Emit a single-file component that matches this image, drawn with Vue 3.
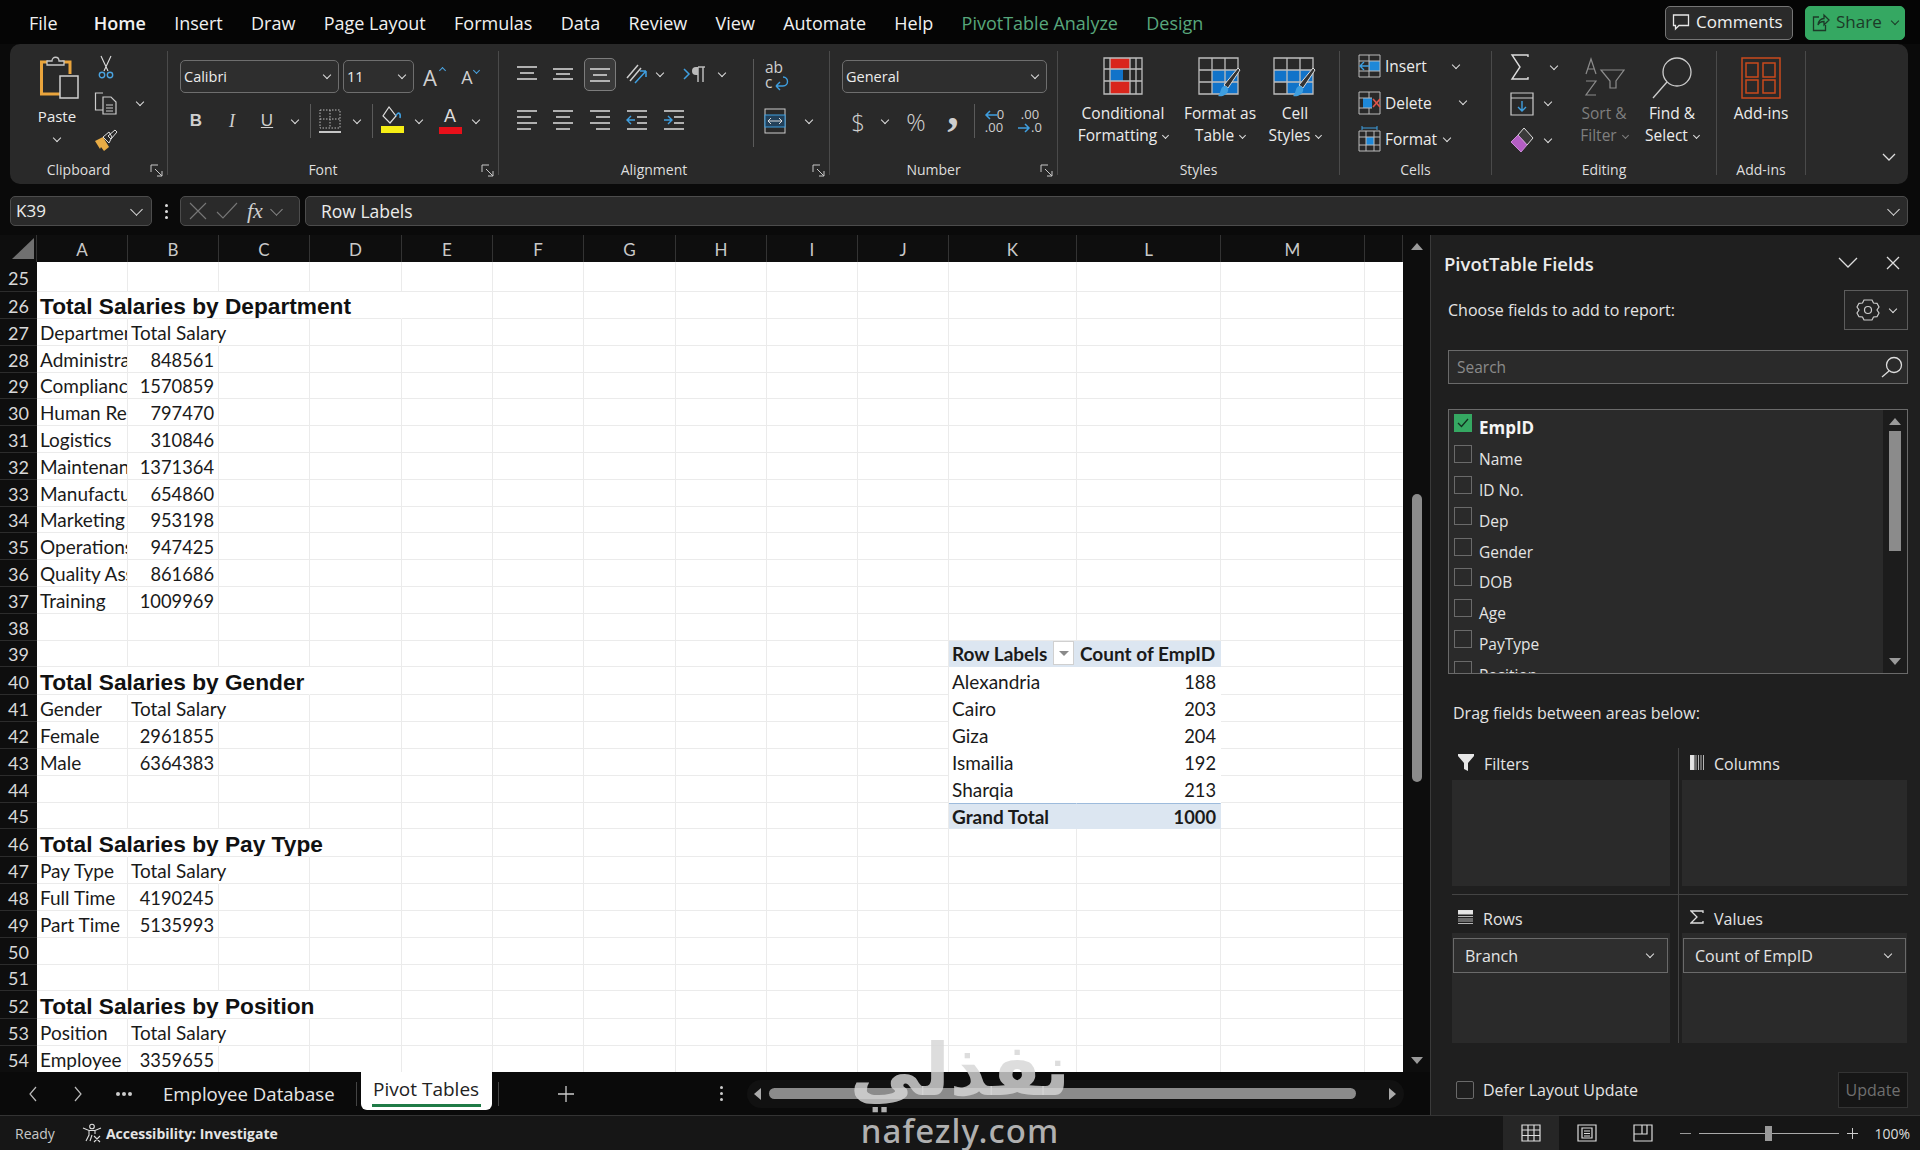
<template>
  <div class="app">
    <!-- tab strip -->
    <div class="menu">
      <div class="menu-tabs">
        <span v-for="t in menuTabs" :key="t.name" class="menu-tab" :class="t.cls">{{ t.name }}</span>
      </div>
      <div class="menu-actions">
        <button class="btn-comments">
          <svg width="18" height="18" viewBox="0 0 18 18" fill="none" stroke="#e6e6e6" stroke-width="1.3"><path d="M1.5 2h15v10.5H7L3.5 16v-3.500h-2z"/></svg>
          Comments
        </button>
        <button class="btn-share">
          <svg width="18" height="20" viewBox="0 0 18 20" fill="none" stroke="#1c3a28" stroke-width="1.3"><path d="M7 5H1.500v13.500h12V13M6 13c0-4 3-6.500 6-6.500V3l5 5-5 5V9.500c-2.500 0-5 1-6 3.500z"/></svg>
          Share <i class="chev dark"></i>
        </button>
      </div>
    </div>

    <!-- ribbon -->
    <div class="ribbon">
      <section class="rg rg-clip">
        <div class="rg-body">
          <div class="paste">
            <svg class="paste-ico" width="40" height="44" viewBox="0 0 40 44" fill="none">
              <path d="M8 6H1.500v32H20" stroke="#e9a43c" stroke-width="3"/>
              <path d="M22 6h8v12" stroke="#e9a43c" stroke-width="3"/>
              <path d="M7 9V5h5c0-5 7-5 7 0h5v4z" fill="#2a2a2a" stroke="#c8c8c8" stroke-width="1.300"/>
              <rect x="20" y="20" width="18" height="22" fill="#2a2a2a" stroke="#d0d0d0" stroke-width="1.500"/>
            </svg>
            <span>Paste</span>
            <i class="chev"></i>
          </div>
          <div class="clip-small">
            <svg width="16" height="24" viewBox="0 0 16 24" fill="none" stroke="#ddd" stroke-width="1.100"><path d="M3 1l7 15M13 1L6 16"/><circle cx="4" cy="20" r="2.700" stroke="#4aa3e0" stroke-width="1.400"/><circle cx="12" cy="20" r="2.700" stroke="#4aa3e0" stroke-width="1.400"/></svg>
            <div class="copy-row">
              <svg width="24" height="24" viewBox="0 0 24 24" fill="none" stroke="#ccc" stroke-width="1.200"><path d="M9 2H1.500v17H9"/><path d="M9 6h8l5 5v12H9z" fill="#2a2a2a"/><path d="M12 14h7M12 17h7M12 20h7" stroke-width="1"/></svg>
              <i class="chev"></i>
            </div>
            <svg width="24" height="24" viewBox="0 0 24 24"><path d="M1 13l8-4 6 10-5 4-3-4-1 2z" fill="#e8ac45"/><path d="M9 9l6-5 3 5-3 6z" fill="#2a2a2a" stroke="#ddd"/><path d="M14 8l7-6 2 2-6 7z" fill="none" stroke="#ddd"/></svg>
          </div>
        </div>
        <div class="rg-label shift-l">Clipboard
          <svg class="launch" width="13" height="13" viewBox="0 0 13 13" fill="none" stroke="#c8c8c8" stroke-width="1"><path d="M1 8V1h7M5 5l7 7M12 7v5H7"/></svg>
        </div>
      </section>

      <section class="rg rg-font">
        <div class="rg-body col">
          <div class="font-row1">
            <div class="select sel-font"><span>Calibri</span><i class="chev"></i></div>
            <div class="select sel-size"><span>11</span><i class="chev"></i></div>
            <span class="grow-a">A<sup class="caret up"></sup></span>
            <span class="grow-a sm">A<sup class="caret down"></sup></span>
          </div>
          <div class="font-row2">
            <span class="tb t-b">B</span>
            <span class="tb t-i">I</span>
            <span class="tb t-u">U</span>
            <span class="tb"><i class="chev"></i></span>
            <span class="tb"><b class="vbar"></b></span>
            <span class="tb">
              <svg width="22" height="26" viewBox="0 0 22 26" fill="none" stroke="#bbb"><path d="M1 2h20v18H1zM11 2v18M1 11h20" stroke-dasharray="1.500 1.500"/><path d="M0 24h22" stroke-width="1.600" stroke="#eee"/></svg>
            </span>
            <span class="tb"><i class="chev"></i></span>
            <span class="tb"><b class="vbar"></b></span>
            <span class="tb color-ico">
              <svg width="24" height="20" viewBox="0 0 24 20" fill="none" stroke="#ddd" stroke-width="1.200"><path d="M9 1L3 10l7 7 6-7z"/><path d="M16 10c2-5 5-3 4 2" stroke="#3f9fe0" stroke-width="1.600"/></svg>
              <em class="yellow"></em>
            </span>
            <span class="tb"><i class="chev"></i></span>
            <span class="tb color-ico"><span class="a-txt">A</span><em class="red"></em></span>
            <span class="tb"><i class="chev"></i></span>
          </div>
        </div>
        <div class="rg-label shift-l">Font
          <svg class="launch" width="13" height="13" viewBox="0 0 13 13" fill="none" stroke="#c8c8c8" stroke-width="1"><path d="M1 8V1h7M5 5l7 7M12 7v5H7"/></svg>
        </div>
      </section>

      <section class="rg rg-align">
        <div class="rg-body">
          <div class="al-left">
            <div class="al-row1">
              <span class="tb"><svg width="22" height="18" viewBox="0 0 22 18" stroke="#ddd" stroke-width="1.400"><path d="M1 2h20M4 8h14M1 14h20"/></svg></span>
              <span class="tb"><svg width="22" height="18" viewBox="0 0 22 18" stroke="#ddd" stroke-width="1.400"><path d="M1 4h20M4 9h14M1 14h20"/></svg></span>
              <span class="tb"><span class="al-sel"><svg width="22" height="18" viewBox="0 0 22 18" stroke="#ddd" stroke-width="1.400"><path d="M1 4h20M4 10h14M1 16h20"/></svg></span></span>
              <span class="tb"><svg width="24" height="24" viewBox="0 0 24 24" fill="none"><path d="M4 16L15 3M7 19L18 6" stroke="#ccc" stroke-width="1.500"/><path d="M12 21L23 9M23 9h-6M23 9v6" stroke="#3f9fe0" stroke-width="1.500"/></svg></span>
              <span class="tb"><i class="chev"></i></span>
              <span></span>
              <span class="tb"><svg width="26" height="18" viewBox="0 0 26 18" fill="none"><path d="M2 4l5 5-5 5" stroke="#3f9fe0" stroke-width="1.500"/><path d="M16 2v15M21 2v15" stroke="#bbb" stroke-width="1.500"/><path d="M16 2h-2a4 4 0 0 0 0 8h2z" fill="#bbb"/><path d="M16 2h7" stroke="#bbb" stroke-width="1.500"/></svg></span>
              <span class="tb"><i class="chev"></i></span>
            </div>
            <div class="al-row2">
              <span class="tb"><svg width="22" height="24" viewBox="0 0 22 24" stroke="#ddd" stroke-width="1.400"><path d="M1 3h20M1 9h14M1 15h20M1 21h14"/></svg></span>
              <span class="tb"><svg width="22" height="24" viewBox="0 0 22 24" stroke="#ddd" stroke-width="1.400"><path d="M1 3h20M4 9h14M1 15h20M4 21h14"/></svg></span>
              <span class="tb"><svg width="22" height="24" viewBox="0 0 22 24" stroke="#ddd" stroke-width="1.400"><path d="M1 3h20M7 9h14M1 15h20M7 21h14"/></svg></span>
              <span class="tb"><svg width="22" height="24" viewBox="0 0 22 24" fill="none" stroke-width="1.400"><path d="M1 3h20M11 9h10M11 15h10M1 21h20" stroke="#ddd"/><path d="M9 12H1M5 8l-4 4 4 4" stroke="#3f9fe0"/></svg></span>
              <span class="tb"><svg width="22" height="24" viewBox="0 0 22 24" fill="none" stroke-width="1.400"><path d="M1 3h20M11 9h10M11 15h10M1 21h20" stroke="#ddd"/><path d="M1 12h8M5 8l4 4-4 4" stroke="#3f9fe0"/></svg></span>
            </div>
          </div>
          <b class="vbar tall"></b>
          <div class="al-right">
            <div class="wrap-ico">
              <svg width="24" height="28" viewBox="0 0 24 28" fill="none"><path d="M10 20h7c6 0 6-9 0-9M10 20l4-4M10 20l4 4" stroke="#3f9fe0" stroke-width="1.400"/></svg>
              <span class="wrap-txt">ab<br>c</span>
            </div>
            <div class="merge-row">
              <svg width="22" height="26" viewBox="0 0 22 26" fill="none"><rect x="1" y="1" width="20" height="24" stroke="#ccc"/><rect x="1" y="7" width="20" height="12" stroke="#3f9fe0" fill="#23415a"/><path d="M4 13h14M4 13l3-3M4 13l3 3M18 13l-3-3M18 13l-3 3" stroke="#ddd"/></svg>
              <i class="chev"></i>
            </div>
          </div>
        </div>
        <div class="rg-label shift-l">Alignment
          <svg class="launch" width="13" height="13" viewBox="0 0 13 13" fill="none" stroke="#c8c8c8" stroke-width="1"><path d="M1 8V1h7M5 5l7 7M12 7v5H7"/></svg>
        </div>
      </section>

      <section class="rg rg-number">
        <div class="rg-body col">
          <div class="select sel-num"><span>General</span><i class="chev"></i></div>
          <div class="num-row">
            <span class="tb t-num">$</span>
            <span class="tb"><i class="chev"></i></span>
            <span class="tb t-num">%</span>
            <span class="tb t-comma">,</span>
            <span class="tb"><b class="vbar"></b></span>
            <span class="tb dec">
              <span class="dec-line"><svg width="13" height="10" viewBox="0 0 13 10" fill="none" stroke="#3f9fe0" stroke-width="1.500"><path d="M13 5H2M6 1L2 5l4 4"/></svg>0</span>
              <span class="dec-line">.00</span>
            </span>
            <span class="tb dec">
              <span class="dec-line">.00</span>
              <span class="dec-line"><svg width="13" height="10" viewBox="0 0 13 10" fill="none" stroke="#3f9fe0" stroke-width="1.500"><path d="M0 5h11M7 1l4 4-4 4"/></svg>.0</span>
            </span>
          </div>
        </div>
        <div class="rg-label shift-l">Number
          <svg class="launch" width="13" height="13" viewBox="0 0 13 13" fill="none" stroke="#c8c8c8" stroke-width="1"><path d="M1 8V1h7M5 5l7 7M12 7v5H7"/></svg>
        </div>
      </section>

      <section class="rg rg-styles">
        <div class="rg-body">
          <div class="big w-cf">
            <div class="big-ico">
              <svg width="40" height="38" viewBox="0 0 40 38" fill="none"><path d="M7 1h20v11H7zM7 24h20v13H7z" fill="#d9261c"/><path d="M7 12h13v12H7z" fill="#1173c9"/><path d="M1 1h38v36H1zM1 12h38M1 24h38M7 1v36M27 1v36M33 1v36" stroke="#bdbdbd" stroke-width="1.300"/></svg>
            </div>
            <span>Conditional</span>
            <span>Formatting <i class="chev sm"></i></span>
          </div>
          <div class="big w-ft">
            <div class="big-ico">
              <svg width="44" height="44" viewBox="0 0 44 44" fill="none"><path d="M14 13h26v24H14z" fill="#1173c9"/><path d="M1 1h39v36H1zM1 13h39M1 25h39M14 1v36M27 1v36" stroke="#bdbdbd" stroke-width="1.300"/><path d="M42 13L30 31l-4-3L40 11z" fill="#333" stroke="#ddd"/><path d="M26 29c3 0 5 2 4 5-1 4-6 6-10 5 3-2 2-9 6-10z" fill="#3f9fe0"/></svg>
            </div>
            <span>Format as</span>
            <span>Table <i class="chev sm"></i></span>
          </div>
          <div class="big w-cs">
            <div class="big-ico">
              <svg width="44" height="44" viewBox="0 0 44 44" fill="none"><path d="M1 13h39v24H14V25H1z" fill="#1173c9"/><path d="M1 1h39v36H1zM1 13h39M1 25h39M14 1v36M27 1v36" stroke="#bdbdbd" stroke-width="1.300"/><path d="M42 13L30 31l-4-3L40 11z" fill="#333" stroke="#ddd"/><path d="M26 29c3 0 5 2 4 5-1 4-6 6-10 5 3-2 2-9 6-10z" fill="#3f9fe0"/></svg>
            </div>
            <span>Cell</span>
            <span>Styles <i class="chev sm"></i></span>
          </div>
        </div>
        <div class="rg-label">Styles</div>
      </section>

      <section class="rg rg-cells">
        <div class="rg-body col cells-col">
          <div class="cell-btn">
            <svg width="23" height="24" viewBox="0 0 23 24" fill="none"><path d="M11 7h11v10H11z" fill="#1e88d8"/><path d="M1 1h21v22H1zM1 7h21M1 17h21M11 1v22" stroke="#bbb"/><path d="M11 12H3M6 8l-4 4 4 4" stroke="#3f9fe0" stroke-width="1.400"/></svg>
            <span>Insert</span><i class="chev ch-ins"></i>
          </div>
          <div class="cell-btn">
            <svg width="23" height="24" viewBox="0 0 23 24" fill="none"><path d="M5 7h9v10H5z" fill="#1e88d8"/><path d="M1 1h21v22H1zM1 7h13M1 17h13M1 23M11 1v6M11 17v6" stroke="#bbb"/><path d="M15 8l7 8M22 8l-7 8" stroke="#e0554c" stroke-width="1.600"/></svg>
            <span>Delete</span><i class="chev ch-del"></i>
          </div>
          <div class="cell-btn">
            <svg width="23" height="26" viewBox="0 0 23 26" fill="none"><path d="M8 11h8v8H8z" fill="#1e88d8"/><path d="M1 5h21v20H1zM1 11h21M1 19h21M8 5v20M16 5v20" stroke="#bbb"/><path d="M4 2h15M4 0v4M19 0v4" stroke="#3f9fe0"/></svg>
            <span>Format</span><i class="chev ch-fmt"></i>
          </div>
        </div>
        <div class="rg-label">Cells</div>
      </section>

      <section class="rg rg-edit">
        <div class="rg-body">
          <div class="edit-left">
            <div class="edit-row">
              <svg width="20" height="26" viewBox="0 0 20 26" fill="none" stroke="#ddd" stroke-width="1.400"><path d="M18 3V1H2l8 12-8 12h16v-2"/></svg>
              <i class="chev e1"></i>
            </div>
            <div class="edit-row">
              <svg width="24" height="24" viewBox="0 0 24 24" fill="none"><path d="M1 1h22v22H1zM1 6h22" stroke="#ccc" stroke-width="1.200"/><path d="M12 9v10M8 15l4 4 4-4" stroke="#3f9fe0" stroke-width="1.400"/></svg>
              <i class="chev"></i>
            </div>
            <div class="edit-row">
              <svg width="24" height="26" viewBox="0 0 24 26"><path d="M14 1l9 10-6 7-9-10z" fill="#3a3a3a" stroke="#ddd"/><path d="M8 8l9 10-6 7-10-10z" fill="#b45ec4" stroke="#c98cd6"/></svg>
              <i class="chev"></i>
            </div>
          </div>
          <div class="big w-sort dim">
            <div class="big-ico">
              <svg width="42" height="40" viewBox="0 0 42 40" fill="none" stroke="#8c8c8c" stroke-width="1.200"><path d="M18 13H41l-8 11v7h-6v-7z"/><path d="M3 17L8 2l5 15M5 12h6M3 24h10L3 38h10"/></svg>
            </div>
            <span>Sort &amp;</span>
            <span>Filter <i class="chev sm"></i></span>
          </div>
          <div class="big w-find">
            <div class="big-ico">
              <svg width="42" height="42" viewBox="0 0 42 42" fill="none" stroke="#ccc" stroke-width="1.300"><circle cx="26" cy="15" r="14"/><path d="M16 25L2 41"/></svg>
            </div>
            <span>Find &amp;</span>
            <span>Select <i class="chev sm"></i></span>
          </div>
        </div>
        <div class="rg-label">Editing</div>
      </section>

      <section class="rg rg-addins">
        <div class="rg-body">
          <div class="big w-add">
            <div class="big-ico">
              <svg width="40" height="42" viewBox="0 0 40 42" fill="none" stroke="#c9491c" stroke-width="1.500"><path d="M1 1h38v40H1z"/><path d="M5 6h12v14H5zM22 6h12v14H22zM5 23h12v13H5zM22 23h12v13H22z"/></svg>
            </div>
            <span>Add-ins</span>
          </div>
        </div>
        <div class="rg-label">Add-ins</div>
      </section>

      <div class="rib-end">
        <svg width="14" height="9" viewBox="0 0 14 9" fill="none" stroke="#ddd" stroke-width="1.300"><path d="M1 1l6 6 6-6"/></svg>
      </div>
    </div>

    <!-- formula bar -->
    <div class="fbar">
      <div class="name-box"><span>K39</span><i class="chev lg"></i></div>
      <div class="fdots"><i></i><i></i><i></i></div>
      <div class="fx-box">
        <svg width="18" height="18" viewBox="0 0 18 18" stroke="#777" stroke-width="1.100"><path d="M1 1l16 16M17 1L1 17"/></svg>
        <svg width="22" height="18" viewBox="0 0 22 18" fill="none" stroke="#777" stroke-width="1.100"><path d="M1 10l6 6L21 1"/></svg>
        <span class="fx">fx</span>
        <i class="chev lg dimc"></i>
      </div>
      <div class="f-input"><span>Row Labels</span><i class="chev lg"></i></div>
    </div>

    <!-- work area -->
    <div class="work">
      <div class="sheet-side">
        <div class="sheet-top">
          <div class="grid">
            <div class="hcell corner"><svg width="22" height="21" viewBox="0 0 22 21"><path d="M22 0v21H0z" fill="#707070"/></svg></div>
            <div v-for="c in colNames" :key="c" class="hcell">{{ c }}</div>
            <template v-for="r in sheetRows" :key="r.no">
              <div class="rowno" :style="{ height: r.h + 'px' }">{{ r.no }}</div>
              <div v-for="c in r.cells" :key="c.key" class="cell" :class="c.cls">
                <span v-if="c.text" class="ct">{{ c.text }}</span>
                <span v-if="c.filter" class="filter-btn"><i></i></span>
              </div>
            </template>
          </div>
          <div class="vscroll">
            <i class="tri-up"></i>
            <div class="vtrack"><div class="vthumb"></div></div>
            <i class="tri-down"></i>
          </div>
        </div>
        <div class="sheet-tabs">
          <svg class="nav" width="10" height="16" viewBox="0 0 10 16" fill="none" stroke="#bbb" stroke-width="1.200"><path d="M8 1L2 8l6 7"/></svg>
          <svg class="nav nav2" width="10" height="16" viewBox="0 0 10 16" fill="none" stroke="#bbb" stroke-width="1.200"><path d="M2 1l6 7-6 7"/></svg>
          <span class="more"><i></i><i></i><i></i></span>
          <span class="stab">Employee Database</span>
          <b class="tab-sep"></b>
          <span class="stab active">Pivot Tables</span>
          <b class="tab-sep"></b>
          <svg class="plus" width="18" height="18" viewBox="0 0 18 18" stroke="#ccc" stroke-width="1.300"><path d="M9 1v16M1 9h16"/></svg>
          <div class="fdots small"><i></i><i></i><i></i></div>
          <div class="hscroll">
            <i class="tri-left"></i>
            <div class="hthumb"></div>
            <i class="tri-right"></i>
          </div>
        </div>
      </div>

      <aside class="panel">
        <div class="p-head">
          <span class="p-title">PivotTable Fields</span>
          <svg class="p-chev" width="20" height="12" viewBox="0 0 20 12" fill="none" stroke="#ddd" stroke-width="1.300"><path d="M1 1l9 9 9-9"/></svg>
          <svg width="14" height="14" viewBox="0 0 14 14" stroke="#ddd" stroke-width="1.300"><path d="M1 1l12 12M13 1L1 13"/></svg>
        </div>
        <div class="p-choose">
          <span>Choose fields to add to report:</span>
          <div class="gear-box">
            <svg width="24" height="22" viewBox="0 0 24 22" fill="none" stroke="#ccc" stroke-width="1.200"><path d="M8 1h8l1.500 3 3.500.3L23 8l-2 3 2 3-2 3.700-3.500.3L16 21H8l-1.500-3-3.500-.3L1 14l2-3-2-3 2-3.700 3.500-.3z"/><circle cx="12" cy="11" r="3.500"/></svg>
            <i class="chev"></i>
          </div>
        </div>
        <div class="p-search">
          <span>Search</span>
          <svg width="22" height="22" viewBox="0 0 22 22" fill="none" stroke="#ddd" stroke-width="1.300"><circle cx="13" cy="9" r="7.500"/><path d="M8 15l-7 6"/></svg>
        </div>
        <div class="p-list">
          <div class="p-items">
            <div v-for="f in fields" :key="f.name" class="p-item" :class="{ on: f.on }">
              <span class="cb">
                <svg v-if="f.on" width="12" height="10" viewBox="0 0 12 10" fill="none" stroke="#12301f" stroke-width="1.300"><path d="M1 5l3.500 3.500L11 1"/></svg>
              </span>
              <span class="p-name">{{ f.name }}</span>
            </div>
          </div>
          <div class="p-scroll">
            <i class="tri-up gray"></i>
            <div class="p-thumb"></div>
            <i class="tri-down gray"></i>
          </div>
        </div>
        <div class="p-drag">Drag fields between areas below:</div>
        <div class="areas">
          <div class="area a-tl">
            <div class="area-head">
              <svg width="16" height="17" viewBox="0 0 16 17"><path d="M0 0h16v2l-6 7v8l-4-2V9L0 2z" fill="#e6e6e6"/></svg>
              <span>Filters</span>
            </div>
            <div class="area-box tall-top"></div>
          </div>
          <div class="area a-tr">
            <div class="area-head">
              <svg width="14" height="15" viewBox="0 0 14 15" fill="none" stroke="#ddd"><path d="M0 0h4v15H0z" fill="#e6e6e6"/><path d="M6 0v15M8.500 0v15M11 0v15M13.500 0v15" stroke-width=".8"/></svg>
              <span>Columns</span>
            </div>
            <div class="area-box tall-top"></div>
          </div>
          <div class="area a-bl">
            <div class="area-head">
              <svg width="15" height="14" viewBox="0 0 15 14" fill="none" stroke="#ddd"><path d="M0 0h15v4H0z" fill="#e6e6e6"/><path d="M0 6.500h15M0 9h15M0 11h15M0 13.500h15" stroke-width=".8"/></svg>
              <span>Rows</span>
            </div>
            <div class="area-box">
              <div class="chip"><span>Branch</span><i class="chev"></i></div>
            </div>
          </div>
          <div class="area a-br">
            <div class="area-head">
              <svg width="14" height="14" viewBox="0 0 14 14" fill="none" stroke="#ddd" stroke-width="1.300"><path d="M13 3V1H1l6 6-6 6h12v-2"/></svg>
              <span>Values</span>
            </div>
            <div class="area-box">
              <div class="chip"><span>Count of EmpID</span><i class="chev"></i></div>
            </div>
          </div>
        </div>
        <div class="p-foot">
          <span class="cb round"></span>
          <span class="defer">Defer Layout Update</span>
          <button class="btn-upd">Update</button>
        </div>
      </aside>
    </div>

    <!-- status bar -->
    <div class="status">
      <span class="st-ready">Ready</span>
      <svg width="20" height="20" viewBox="0 0 20 20" fill="none" stroke="#ddd" stroke-width="1.100"><circle cx="10" cy="3.500" r="2.300"/><path d="M1 5l6 2.500h6L19 5M7 8v4l-3 6M13 8v3M10 12l-2 6M12 13l6 6M18 13l-6 6"/></svg>
      <span class="st-acc">Accessibility: Investigate</span>
      <div class="st-right">
        <span class="view on"><svg width="20" height="18" viewBox="0 0 20 18" fill="none" stroke="#ddd" stroke-width="1.200"><path d="M1 1h18v16H1zM1 6h18M1 11.500h18M7 1v16M13 1v16"/></svg></span>
        <span class="view"><svg width="20" height="18" viewBox="0 0 20 18" fill="none" stroke="#ddd" stroke-width="1.200"><path d="M1 1h18v16H1zM5 4h10v10H5zM7 7h6M7 9.500h6M7 12h6"/></svg></span>
        <span class="view"><svg width="20" height="18" viewBox="0 0 20 18" fill="none" stroke="#ddd" stroke-width="1.200"><path d="M1 1h18v16H1zM1 10h8V1M9 10h5V1"/></svg></span>
        <span class="zoom-m"></span>
        <div class="zoom-track"><div class="zoom-thumb"></div></div>
        <svg class="zoom-p" width="11" height="11" viewBox="0 0 11 11" stroke="#ccc"><path d="M5.500 0v11M0 5.500h11"/></svg>
        <span class="zoom-v">100%</span>
      </div>
    </div>

    <!-- watermark burned into the capture -->
    <div class="wm">
      <span class="wm-ar" dir="rtl">نفذلي</span>
      <span class="wm-en">nafezly.com</span>
    </div>
  </div>
</template>

<script setup>
const menuTabs = [
  { name: 'File' },
  { name: 'Home', cls: 'active' },
  { name: 'Insert' },
  { name: 'Draw' },
  { name: 'Page Layout' },
  { name: 'Formulas' },
  { name: 'Data' },
  { name: 'Review' },
  { name: 'View' },
  { name: 'Automate' },
  { name: 'Help' },
  { name: 'PivotTable Analyze', cls: 'ctx' },
  { name: 'Design', cls: 'ctx' }
]

const colNames = ['A', 'B', 'C', 'D', 'E', 'F', 'G', 'H', 'I', 'J', 'K', 'L', 'M', '']

// what the sheet holds: [row]: { A, B } plus how many columns a title runs over
const left = {
  26: { title: 'Total Salaries by Department', span: 4 },
  27: { a: 'Department', b: 'Total Salary' },
  28: { a: 'Administration', b: 848561 },
  29: { a: 'Compliance', b: 1570859 },
  30: { a: 'Human Resources', b: 797470 },
  31: { a: 'Logistics', b: 310846 },
  32: { a: 'Maintenance', b: 1371364 },
  33: { a: 'Manufacturing', b: 654860 },
  34: { a: 'Marketing', b: 953198 },
  35: { a: 'Operations', b: 947425 },
  36: { a: 'Quality Assurance', b: 861686 },
  37: { a: 'Training', b: 1009969 },
  40: { title: 'Total Salaries by Gender', span: 3 },
  41: { a: 'Gender', b: 'Total Salary' },
  42: { a: 'Female', b: 2961855 },
  43: { a: 'Male', b: 6364383 },
  46: { title: 'Total Salaries by Pay Type', span: 3 },
  47: { a: 'Pay Type', b: 'Total Salary' },
  48: { a: 'Full Time', b: 4190245 },
  49: { a: 'Part Time', b: 5135993 },
  52: { title: 'Total Salaries by Position', span: 3 },
  53: { a: 'Position', b: 'Total Salary' },
  54: { a: 'Employee', b: 3359655 }
}

const pivot = {
  39: ['Row Labels', 'Count of EmpID'],
  40: ['Alexandria', 188],
  41: ['Cairo', 203],
  42: ['Giza', 204],
  43: ['Ismailia', 192],
  44: ['Sharqia', 213],
  45: ['Grand Total', 1000]
}

function rowHeight(no) {
  if (no === 25) return 30
  if (no === 26) return 27
  if (left[no] && left[no].title) return 28
  return 26.8
}

function buildRow(no) {
  const l = left[no] || {}
  const cells = []
  for (let i = 0; i < 14; i++) {
    const cell = { key: no + '-' + i, text: '', cls: [] }
    if (i === 0 && l.title) {
      cell.text = l.title
      cell.cls.push('title')
    }
    if (l.title && i < l.span) cell.cls.push('noline')
    if (i === 0 && l.a) {
      cell.text = l.a
      cell.cls.push('clip')
    }
    if (i === 1 && l.b !== undefined) {
      cell.text = String(l.b)
      if (typeof l.b === 'number') cell.cls.push('num')
      else cell.cls.push('noline')
    }
    if ((i === 10 || i === 11) && pivot[no]) {
      const v = pivot[no][i - 10]
      cell.text = String(v)
      cell.cls.push('pv')
      if (no === 39) cell.cls.push('pv-head')
      if (no === 45) cell.cls.push('pv-total')
      if (i === 11 && no !== 39) cell.cls.push('num')
      if (i === 10 && no === 39) cell.filter = true
    }
    if (i === 13) cell.cls.push('noline')
    cells.push(cell)
  }
  return { no, h: rowHeight(no), cells }
}

const sheetRows = []
for (let n = 25; n <= 54; n++) sheetRows.push(buildRow(n))

const fields = [
  { name: 'EmpID', on: true },
  { name: 'Name' },
  { name: 'ID No.' },
  { name: 'Dep' },
  { name: 'Gender' },
  { name: 'DOB' },
  { name: 'Age' },
  { name: 'PayType' },
  { name: 'Position' }
]
</script>

<style>
html, body { margin: 0; background: #0a0a0a; }
</style>

<style scoped>
.app {
  position: relative;
  width: 1920px;
  height: 1150px;
  overflow: hidden;
  background: #0a0a0a;
  color: #ececec;
  font-family: "Open Sans", "Noto Sans", sans-serif;
  font-size: 15px;
  display: flex;
  flex-direction: column;
}

.chev {
  display: inline-block;
  width: 5px;
  height: 5px;
  border-right: 1.5px solid #ddd;
  border-bottom: 1.5px solid #ddd;
  transform: rotate(45deg);
  margin-top: -3px;
  flex: none;
}
.chev.sm { width: 4px; height: 4px; margin-left: 2px; vertical-align: 3px; border-width: 1px; }
.chev.lg { width: 8px; height: 8px; border-width: 1.3px; }
.chev.dark { border-color: #1c3a28; margin-left: 4px; vertical-align: 3px; }
.chev.dimc { border-color: #888; }

/* tab strip */
.menu {
  height: 44px;
  flex: none;
  display: flex;
  background: #050505;
}
.menu-tabs {
  display: flex;
  gap: 28.3px;
  padding-left: 29px;
  font-size: 18px;
  line-height: 46px;
}
.menu-tab { color: #f0f0f0; height: 44px; white-space: nowrap; box-sizing: border-box; }
.menu-tab.active { font-weight: 600; border-bottom: 3px solid #6fb58a; height: 48px; line-height: 46px; margin-left: 8px; }
.menu-tab.ctx { color: #58a77c; }
.menu-actions {
  margin-left: auto;
  display: flex;
  gap: 12px;
  padding: 6px 15px 0 0;
}
.btn-comments, .btn-share {
  height: 34px;
  font: inherit;
  font-size: 17px;
  line-height: 30px;
  display: flex;
  align-items: center;
  gap: 6px;
  border-radius: 5px;
  box-sizing: border-box;
}
.btn-comments { width: 128px; padding: 0 6px 2px; background: #2a2a2a; border: 1px solid #757575; color: #efefef; }
.btn-share { width: 100px; padding: 0 6px 2px; background: #35a862; border: 1px solid #35a862; color: #1c3a28; }

/* ribbon */
.ribbon {
  flex: none;
  height: 140px;
  box-sizing: border-box;
  margin: 0 12px 0 10px;
  padding-top: 7px;
  background: #292929;
  border-radius: 10px;
  display: flex;
  align-items: flex-start;
}
.rg {
  position: relative;
  height: 124px;
  box-sizing: border-box;
  border-right: 1px solid #4a4a4a;
  flex: none;
}
.rg-clip { width: 158px; }
.rg-font { width: 331px; }
.rg-align { width: 331px; }
.rg-number { width: 228px; }
.rg-styles { width: 282px; }
.rg-cells { width: 152px; }
.rg-edit { width: 225px; }
.rg-addins { width: 89px; }
.rg-body { height: 110px; display: flex; }
.rg-body.col { flex-direction: column; }
.rg-label {
  position: relative;
  height: 18px;
  line-height: 18px;
  text-align: center;
  font-size: 14px;
  color: #dedede;
}
.launch { position: absolute; right: 4px; top: 3px; }
.shift-l { padding-right: 20px; }
.rib-end { flex: 1; height: 124px; display: flex; align-items: flex-end; justify-content: flex-end; padding-right: 12px; box-sizing: border-box; padding-bottom: 13px; }

.tb {
  display: flex;
  align-items: center;
  justify-content: center;
  height: 30px;
  position: relative;
}
.vbar { display: block; width: 1px; height: 34px; background: #5a5a5a; }
.vbar.tall { height: 88px; margin: 8px 0 0 0; flex: none; }

.paste {
  width: 62px;
  margin-left: 16px;
  padding-top: 5px;
  display: flex;
  flex-direction: column;
  align-items: center;
  font-size: 15px;
}
.paste-ico { margin: 0 0 0 6px; }
.paste span { margin-top: 5px; line-height: 22px; }
.paste .chev { margin-top: 8px; }
.clip-small {
  margin-left: 6px;
  padding-top: 4px;
  display: flex;
  flex-direction: column;
  gap: 12px;
  align-items: flex-start;
}
.clip-small > svg:first-child { margin-left: 4px; }
.clip-small > svg:last-child { margin-top: 1px; }
.copy-row { display: flex; align-items: center; gap: 19px; }

.select {
  display: flex;
  align-items: center;
  justify-content: space-between;
  height: 33px;
  box-sizing: border-box;
  border: 1px solid #6e6e6e;
  border-radius: 5px;
  padding: 0 8px 0 3px;
  background: #2e2e2e;
  font-size: 14.5px;
}
.font-row1 { display: flex; align-items: center; margin: 9px 0 0 12px; }
.sel-font { width: 159px; }
.sel-size { width: 71px; margin-left: 4px; }
.grow-a { font-size: 22px; color: #d0d0d0; width: 36px; margin-left: -2px; text-align: center; position: relative; }
.grow-a.sm { font-size: 18px; margin-left: 1px; }
.caret {
  position: absolute;
  top: 6px;
  right: 3px;
  width: 4px;
  height: 4px;
  border-left: 1.3px solid #4aa3e0;
  border-top: 1.3px solid #4aa3e0;
  transform: rotate(45deg);
}
.caret.down { transform: rotate(225deg); top: 3px; right: 6px; }
.font-row2 {
  display: grid;
  grid-template-columns: 36px 36px 34px 22px 8px 32px 22px 8px 32px 22px 40px 12px;
  margin: 13px 0 0 10px;
}
.t-b { font-weight: 700; font-size: 17px; color: #cfcfcf; font-family: "Liberation Sans", sans-serif; }
.t-i { font-style: italic; font-size: 18px; color: #cfcfcf; font-family: "Liberation Serif", serif; }
.t-u { text-decoration: underline; font-size: 17px; color: #cfcfcf; font-family: "Liberation Sans", sans-serif; }
.color-ico { flex-direction: column; justify-content: flex-start; }
.color-ico em { display: block; width: 23px; height: 7px; margin-top: 0; }
.a-txt { font-size: 18px; line-height: 21px; color: #ddd; font-family: "Liberation Sans", sans-serif; }
.yellow { background: #f6ee15; }
.red { background: #e8101a; }

.al-left { width: 244px; margin-left: 10px; padding-top: 8px; flex: none; }
.al-row1 { display: grid; grid-template-columns: 36px 36px 38px 32px 18px 8px 36px 18px; height: 34px; }
.al-row2 { display: grid; grid-template-columns: 36px 36px 38px 36px 38px; margin-top: 12px; }
.al-sel { width: 32px; height: 33px; border: 1px solid #7c7c7c; border-radius: 5px; background: #3a3a3a; display: flex; align-items: center; justify-content: center; box-sizing: border-box; }
.al-right { display: flex; flex-direction: column; width: 60px; }
.wrap-ico { position: relative; width: 28px; height: 42px; margin: 9px 0 0 10px; }
.wrap-ico svg { position: absolute; left: 2px; top: 6px; }
.wrap-txt { position: absolute; left: 1px; top: 0; font-size: 15.500px; line-height: 15px; color: #cfcfcf; }
.merge-row { display: flex; align-items: center; gap: 20px; margin: 6px 0 0 10px; }

.sel-num { width: 205px; margin: 9px 0 0 12px; }
.num-row { display: grid; grid-template-columns: 32px 22px 40px 34px 8px 32px 40px; margin: 13px 0 0 12px; }
.t-num { font-size: 24px; font-weight: 300; color: #cfcfcf; }
.t-comma { font-size: 46px; font-weight: 700; color: #cfcfcf; padding-bottom: 22px; box-sizing: border-box; font-family: "Liberation Serif", serif; line-height: 20px; }
.dec { flex-direction: column; font-size: 13px; line-height: 13px; color: #cfcfcf; }
.dec-line { white-space: nowrap; display: flex; align-items: center; justify-content: center; }

.big {
  display: flex;
  flex-direction: column;
  align-items: center;
  padding-top: 5px;
  font-size: 15.5px;
  line-height: 22px;
  white-space: nowrap;
  flex: none;
}
.big-ico { height: 46px; display: flex; align-items: flex-start; justify-content: center; padding-top: 1px; box-sizing: border-box; }
.dim { color: #7f7f7f; }
.dim .chev { border-color: #7f7f7f; }
.w-cf { width: 90px; margin-left: 20px; }
.w-ft { width: 104px; }
.w-cs { width: 46px; }
.w-sort { width: 68px; }
.w-find { width: 68px; }
.w-add { width: 88px; }

.cells-col { padding: 0 0 0 18px; margin-top: -3px; height: 113px; }
.cell-btn { height: 36.5px; display: flex; align-items: center; gap: 4px; font-size: 15.5px; }
.ch-ins { margin-left: 22px; }
.ch-del { margin-left: 24px; }
.ch-fmt { margin-left: 3px; }

.edit-left { width: 78px; padding: 0 0 0 18px; margin-top: -2px; box-sizing: border-box; flex: none; }
.edit-row { height: 36.5px; display: flex; align-items: center; gap: 8px; }
.edit-row .chev { margin-left: 3px; }
.edit-row .chev.e1 { margin-left: 13px; }

/* formula bar */
.fbar {
  flex: none;
  height: 30px;
  margin: 12px 12px 9px 10px;
  display: flex;
  align-items: stretch;
}
.name-box, .fx-box, .f-input {
  display: flex;
  align-items: center;
  box-sizing: border-box;
  background: #2a2a2a;
  border: 1px solid #4c4c4c;
  border-radius: 5px;
  padding-bottom: 1px;
}
.name-box { width: 142px; justify-content: space-between; padding: 0 10px 1px 5px; font-size: 17px; }
.fdots { width: 28px; display: flex; flex-direction: column; gap: 3px; align-items: center; justify-content: center; flex: none; }
.fdots i { width: 3px; height: 3px; border-radius: 50%; background: #ddd; display: block; }
.fx-box { width: 120px; gap: 9px; padding: 0 7px 0 8px; }
.fx { font-family: "Liberation Serif", serif; font-style: italic; font-size: 22px; color: #cfcfcf; }
.f-input { flex: 1; margin-left: 5px; justify-content: space-between; padding: 0 9px 1px 15px; font-size: 17.5px; }

/* sheet */
.work { flex: 1; display: flex; min-height: 0; }
.sheet-side { width: 1430px; flex: none; display: flex; flex-direction: column; }
.sheet-top { display: flex; height: 837px; flex: none; }
.grid {
  width: 1403px;
  height: 837px;
  overflow: hidden;
  background: #fff;
  display: grid;
  grid-template-columns: 37px 91px 91px 91px 92px 91px 91px 92px 91px 91px 91px 128px 144px 144px 38px;
  grid-auto-rows: min-content;
  font-family: Lato, "Noto Sans", sans-serif;
  font-size: 19px;
  color: #1a1a1a;
}
.hcell {
  height: 27px;
  background: #0e0e0e;
  color: #c9c9c9;
  border-right: 1px solid #333;
  box-sizing: border-box;
  display: flex;
  align-items: center;
  justify-content: center;
  font-size: 17px;
  padding-top: 2px;
}
.corner { justify-content: flex-end; padding: 0 2px 0 0; }
.rowno {
  background: #0e0e0e;
  color: #d8d8d8;
  font-size: 18px;
  line-height: 20px;
  display: flex;
  align-items: center;
  justify-content: center;
  box-sizing: border-box;
  border-bottom: 1px solid #2c2c2c;
  padding-top: 2px;
}
.cell {
  box-sizing: border-box;
  height: 0;
  min-height: 100%;
  border-right: 1px solid #ebebeb;
  border-bottom: 1px solid #ebebeb;
  padding: 2px 3px 0;
  line-height: 20px;
  display: flex;
  align-items: center;
  white-space: nowrap;
  min-width: 0;
}
.cell.clip { overflow: hidden; }
.cell.noline { border-right-color: transparent; }
.cell.num { justify-content: flex-end; padding-right: 4px; font-size: 18.3px; }
.title { font-family: "Liberation Sans", sans-serif; font-weight: 700; font-size: 22.7px; color: #111; }
.pv { border-right-color: transparent; border-bottom-color: transparent; }
.pv-head { background: #dce6f1; font-weight: 700; justify-content: space-between; }
.pv-total { background: #dce6f1; font-weight: 700; border-top: 1px solid #9dbbdc; }
.filter-btn { width: 21px; height: 24px; background: #fff; border: 1px solid #d0d0d0; box-sizing: border-box; display: flex; align-items: center; justify-content: center; margin: -2px -1px 0 0; }
.filter-btn i { border: 5px solid transparent; border-top: 5px solid #8a8a8a; border-bottom: none; width: 0; height: 0; }

.vscroll { width: 27px; display: flex; flex-direction: column; align-items: center; background: #0d0d0d; }
.vtrack { flex: 1; width: 100%; display: flex; flex-direction: column; align-items: center; padding-top: 236px; box-sizing: border-box; }
.vthumb { width: 10px; height: 288px; background: #8b8b8b; border-radius: 5px; }
.tri-up, .tri-down { width: 0; height: 0; border-left: 6px solid transparent; border-right: 6px solid transparent; margin: 8px 0; flex: none; }
.tri-up { border-bottom: 7px solid #9a9a9a; }
.tri-down { border-top: 7px solid #9a9a9a; }

.sheet-tabs {
  flex: 1;
  display: flex;
  align-items: center;
  background: #0a0a0a;
  font-size: 18.6px;
}
.nav { margin-left: 28px; flex: none; }
.nav2 { margin-left: 35px; }
.more { margin-left: 33px; display: flex; gap: 2px; flex: none; }
.more i { width: 4px; height: 4px; border-radius: 50%; background: #ccc; display: block; }
.stab { white-space: nowrap; }
.sheet-tabs .stab:not(.active) { margin-left: 31px; color: #e6e6e6; }
.tab-sep { width: 1px; height: 24px; background: #444; margin-left: 21px; flex: none; }
.stab.active {
  background: #fff;
  color: #222;
  height: 38px;
  align-self: flex-start;
  margin-left: 4px;
  width: 131px;
  flex: none;
  box-sizing: border-box;
  text-align: center;
  line-height: 34px;
  font-size: 19px;
  border-radius: 0 0 6px 6px;
  position: relative;
}
.stab.active::after {
  content: "";
  position: absolute;
  left: 11px;
  right: 11px;
  bottom: 3px;
  height: 3px;
  background: #1f7a46;
}
.stab.active + .tab-sep { margin-left: 6px; }
.plus { margin-left: 58px; flex: none; }
.fdots.small { margin-left: 142px; width: 10px; }
.fdots.small i { background: #ccc; }
.hscroll {
  margin-left: 20px;
  width: 657px;
  height: 28px;
  border-radius: 14px;
  display: flex;
  align-items: center;
  background: #111;
  flex: none;
}
.tri-left, .tri-right { width: 0; height: 0; border-top: 6px solid transparent; border-bottom: 6px solid transparent; flex: none; }
.tri-left { border-right: 7px solid #aaa; margin: 0 8px 0 7px; }
.tri-right { border-left: 7px solid #aaa; margin: 0 8px 0 33px; }
.hthumb { flex: 1; height: 11px; border-radius: 6px; background: #8b8b8b; }

/* field list */
.panel {
  flex: 1;
  box-sizing: border-box;
  border-left: 1px solid #3a3a3a;
  background: #1f1f1f;
  padding: 13px 12px 0 17px;
  font-size: 16px;
  display: flex;
  flex-direction: column;
  min-width: 0;
}
.p-head { display: flex; align-items: center; height: 30px; margin-left: -4px; }
.p-title { font-size: 18.5px; font-weight: 600; flex: 1; }
.p-chev { margin-right: 28px; }
.p-head svg:last-child { margin-right: 8px; }
.p-choose { display: flex; justify-content: space-between; align-items: center; height: 40px; margin-top: 12px; color: #e4e4e4; }
.gear-box { width: 64px; height: 40px; box-sizing: border-box; border: 1px solid #5c5c5c; background: #242424; display: flex; align-items: center; justify-content: center; gap: 10px; }
.p-search {
  margin-top: 20px;
  height: 34px;
  box-sizing: border-box;
  border: 1px solid #6a6a6a;
  background: #2a2a2a;
  display: flex;
  align-items: center;
  justify-content: space-between;
  padding: 0 4px 0 8px;
  color: #8a8a8a;
  font-size: 15.5px;
}
.p-list {
  margin-top: 25px;
  height: 265px;
  box-sizing: border-box;
  border: 1px solid #6a6a6a;
  background: #2a2a2a;
  display: flex;
  overflow: hidden;
}
.p-items { flex: 1; padding: 4px 0 0 5px; min-width: 0; font-size: 15.5px; }
.p-item { height: 30.9px; display: flex; align-items: flex-start; gap: 7px; color: #e4e4e4; }
.p-name { line-height: 20px; margin-top: 4px; }
.p-item.on .p-name { font-weight: 700; font-size: 17px; color: #f4f4f4; }
.cb {
  width: 18px;
  height: 18px;
  box-sizing: border-box;
  border: 1px solid #6a6a6a;
  flex: none;
  display: flex;
  align-items: center;
  justify-content: center;
}
.p-item.on .cb { background: #35a862; border-color: #35a862; }
.p-scroll { width: 24px; background: #1c1c1c; display: flex; flex-direction: column; align-items: center; flex: none; }
.tri-up.gray { margin: 8px 0 6px; }
.tri-down.gray { margin: auto 0 8px; }
.p-thumb { width: 12px; height: 120px; background: #8b8b8b; }

.p-drag { margin: 29px 0 0 5px; height: 20px; line-height: 20px; color: #e4e4e4; }
.areas {
  margin: 25px 0 0 4px;
  width: 456px;
  display: grid;
  grid-template-columns: 227px 229px;
  grid-template-rows: 147px 148px;
}
.area { box-sizing: border-box; }
.a-tl { border-right: 1px solid #444; border-bottom: 1px solid #444; }
.a-bl { border-right: 1px solid #444; }
.a-tr { border-bottom: 1px solid #444; padding-left: 3px; }
.a-br { padding-left: 3px; }
.area-head { height: 32px; display: flex; align-items: center; gap: 10px; padding-left: 6px; color: #e4e4e4; box-sizing: border-box; }
.area-head svg { margin-top: -4px; }
.a-tr .area-head, .a-br .area-head { padding-left: 8px; }
.a-bl .area-head, .a-br .area-head { height: 38px; padding-top: 9px; }
.area-box { width: 218px; height: 110px; background: #2a2a2a; box-sizing: border-box; padding-top: 5px; }
.a-tr .area-box, .a-br .area-box { width: 225px; }
.area-box.tall-top { height: 106px; padding: 0; }
.chip {
  height: 35px;
  margin-left: 1px;
  width: 215px;
  box-sizing: border-box;
  border: 1px solid #6a6a6a;
  background: #2e2e2e;
  display: flex;
  align-items: center;
  justify-content: space-between;
  padding: 0 14px 0 11px;
  color: #e4e4e4;
}
.a-br .chip { width: 223px; }

.p-foot { display: flex; align-items: center; margin: 29px 0 0 8px; height: 36px; }
.cb.round { border-radius: 2px; }
.defer { margin-left: 9px; flex: 1; color: #e4e4e4; }
.btn-upd { width: 70px; height: 36px; background: #161616; border: 1px solid #333; color: #6f6f6f; font: inherit; }

/* status bar */
.status {
  flex: none;
  height: 35px;
  box-sizing: border-box;
  border-top: 1px solid #333;
  background: #161616;
  display: flex;
  align-items: center;
  padding-left: 15px;
  font-size: 14px;
  color: #c8c8c8;
}
.st-ready { margin-right: 27px; }
.st-acc { margin-left: 4px; font-weight: 700; font-size: 14px; color: #e4e4e4; }
.st-right { margin-left: auto; display: flex; align-items: center; height: 100%; }
.view { width: 56px; height: 100%; display: flex; align-items: center; justify-content: center; }
.view.on { background: #262626; }
.zoom-m { width: 11px; height: 1px; background: #999; margin: 0 8px 0 9px; }
.zoom-track { width: 140px; height: 1px; background: #aaa; position: relative; }
.zoom-thumb { position: absolute; left: 66px; top: -7px; width: 7px; height: 15px; background: #999; }
.zoom-p { margin: 0 0 0 8px; }
.zoom-v { margin: 0 10px 0 16px; font-size: 14px; color: #ddd; }

/* watermark */
.wm {
  position: absolute;
  left: 840px;
  top: 1024px;
  width: 240px;
  height: 126px;
  display: flex;
  flex-direction: column;
  align-items: center;
  pointer-events: none;
}
.wm-ar { font-family: "DejaVu Sans", sans-serif; font-weight: 700; font-size: 72px; line-height: 92px; color: rgba(214, 214, 214, 0.82); }
.wm-en { font-family: "Noto Sans", sans-serif; font-weight: 500; font-size: 33px; line-height: 30px; letter-spacing: 1px; color: rgba(205, 205, 205, 0.85); }
</style>
